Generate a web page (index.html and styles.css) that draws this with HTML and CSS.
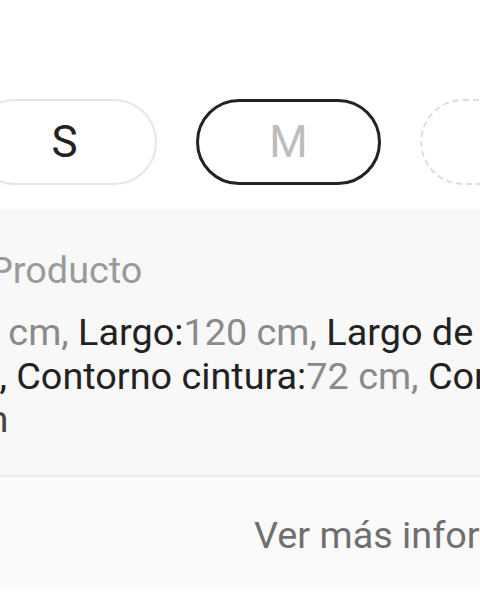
FILE: index.html
```html
<!DOCTYPE html>
<html lang="es">
<head>
<meta charset="utf-8">
<title>Producto</title>
<link rel="stylesheet" href="styles.css">
</head>
<body>
  <div class="sizes">
    <div class="pill pill-s">S</div>
    <div class="pill pill-m">M</div>
    <div class="pill pill-dashed">L</div>
  </div>

  <section class="details">
    <h2 class="title">Detalles del Producto</h2>
    <div class="text">
      <div class="line line1"><span class="v">96 cm, </span>Largo:<span class="v">120 cm, </span>Largo de</div>
      <div class="line line2">cm, Contorno cintura:<span class="v">72 cm, </span>Contorno cadera:<span class="v">98</span></div>
      <div class="line line3">cm</div>
    </div>
  </section>

  <div class="more">
    <span class="more-link">Ver más información</span>
  </div>
</body>
</html>
```

FILE: styles.css
```css
html, body {
  margin: 0;
  padding: 0;
  width: 480px;
  height: 600px;
  overflow: hidden;
  background: #ffffff;
  font-family: Roboto, "Noto Sans", sans-serif;
}

.sizes {
  display: flex;
  gap: 39px;
  margin-left: -28px;
  padding-top: 99px;
  padding-bottom: 24px;
  white-space: nowrap;
}

.pill {
  flex: 0 0 185px;
  width: 185px;
  height: 86px;
  box-sizing: border-box;
  border-radius: 43px;
  display: flex;
  align-items: center;
  justify-content: center;
  font-size: 44px;
  line-height: 1;
}

.pill-s {
  border: 2px solid #e6e6e6;
  color: #222222;
}

.pill-m {
  border: 3px solid #232323;
  color: #bdbdbd;
}

.pill-dashed {
  border: 2px dashed #dedede;
  color: #cccccc;
}

.details {
  background: #f8f8f8;
  padding-top: 39px;
  padding-bottom: 33px;
  border-bottom: 2px solid #ececec;
}

.title {
  margin: 0 0 19px -216px;
  font-weight: 400;
  font-size: 37.8px;
  line-height: 44px;
  color: #9a9a9a;
  white-space: nowrap;
}

.text {
  margin-left: -54px;
  font-size: 37.8px;
  line-height: 43.5px;
  color: #222222;
}

.line {
  white-space: nowrap;
}

.line1 { padding-left: 10.5px; }
.line2 { padding-left: 0.5px; }
.line3 { padding-left: 9.5px; color: #444444; }

.v {
  color: #8a8a8a;
}

.more {
  background: #fafafa;
  height: 112px;
  display: flex;
  align-items: center;
  padding-left: 254px;
  white-space: nowrap;
}

.more-link {
  font-size: 37.8px;
  color: #6f6f6f;
  line-height: 44px;
  padding-top: 4px;
}
```
